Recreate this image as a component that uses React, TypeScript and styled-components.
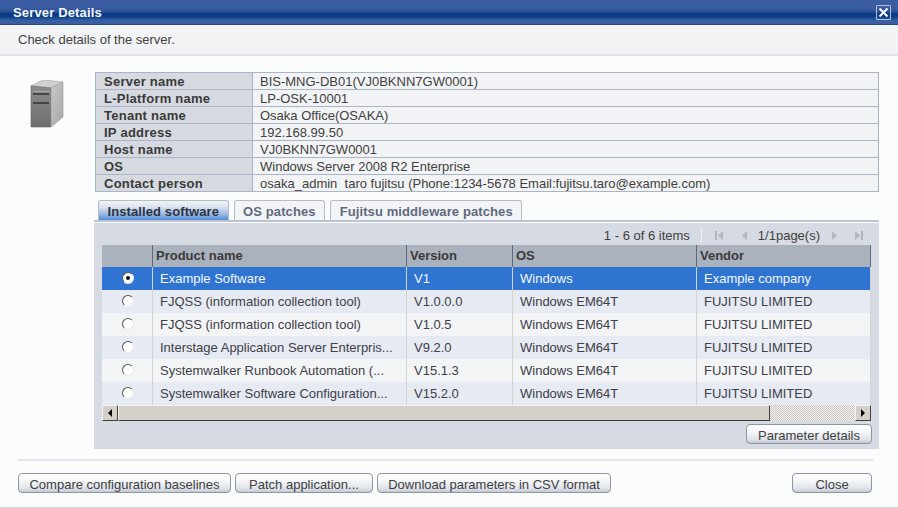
import React from 'react';
import styled, { createGlobalStyle } from 'styled-components';

const Global = createGlobalStyle`
  html, body { margin: 0; padding: 0; background: #fbfcfc; }
  body { width: 898px; height: 508px; overflow: hidden; font-family: "Liberation Sans", Arial, sans-serif; font-size: 13px; color: #3a3a3a; }
`;
const Dialog = styled.div`
  width: 898px; height: 508px; display: flex; flex-direction: column; background: #fbfcfc; box-sizing: border-box;
  border-bottom: 1px solid #d4d6d8;
`;
const TitleBar = styled.div`
  height: 25px; flex: none; box-sizing: border-box; padding: 0 7px 0 13px; display: flex; align-items: center; justify-content: space-between;
  background: linear-gradient(#3c5da3 0, #3a5ca2 30%, #2f5296 48%, #083b82 56%, #0c4088 70%, #3a60a4 86%, #3b5ea3 95%);
  border-bottom: 1px solid #2a4a86;
  color: #f4f6fa; font-weight: bold; font-size: 13px; letter-spacing: 0.15px;
`;
const CloseBox = styled.div`
  width: 15px; height: 15px; box-sizing: border-box; border: 1px solid #b5c2da; border-radius: 1px; display: flex; align-items: center; justify-content: center; margin-top: 1px;
`;
const SubHead = styled.div`
  height: 31px; flex: none; box-sizing: border-box; padding: 0 18px 1px; display: flex; align-items: center;
  background: #f1f3f4; border-bottom: 2px solid #e1e4e7; font-size: 13px; color: #424242;
`;
const Content = styled.div`
  display: grid; grid-template-columns: 94px 1fr; padding-top: 16px; flex: none;
`;
const IconCell = styled.div`
  padding: 8px 0 0 30px;
`;
const Main = styled.div`
  width: 786px; display: flex; flex-direction: column;
`;
const Info = styled.table`
  border-collapse: collapse; width: 784px; margin-left: 1px; table-layout: fixed;
  border: 1px solid #a9b5c7;
  td, th { padding: 1px 0 0; box-sizing: border-box; height: 17px; border: 1px solid #a9b5c7; line-height: 15px; font-size: 13px; white-space: pre; }
  th { width: 157px; background: #d6d9e0; text-align: left; font-weight: bold; padding-left: 8px; color: #3a3a3a; letter-spacing: 0.25px; }
  td { background: #f2f3f4; padding-left: 7px; color: #404040; }
`;
const Tabs = styled.div`
  display: flex; gap: 5px; height: 21px; margin: 7px 0 0 4px; align-items: flex-end;
`;
const Tab = styled.div<{ $active?: boolean }>`
  height: 20px; box-sizing: border-box; border: 1px solid #b4bccb; border-bottom: none; border-radius: 3px 3px 0 0; padding: 1px 8.5px 0;
  font-weight: bold; font-size: 13px; display: flex; align-items: center; letter-spacing: 0.1px;
  color: ${p => (p.$active ? '#2b3443' : '#5f6a80')};
  background: ${p => (p.$active ? 'linear-gradient(#f1f3f6 0, #dfe5ee 30%, #8fb1e0 75%, #4f8ad8 100%)' : '#f2f4f6')};
`;
const Panel = styled.div`
  width: 785px; box-sizing: border-box; height: 229px; border-top: 2px solid #b9c3d3; background: #d6dae2; padding: 3px 7px 0 8px; display: flex; flex-direction: column;
  box-shadow: inset 0 1px 0 #fbfcfc;
`;
const Pager = styled.div`
  height: 20px; display: flex; justify-content: flex-end; align-items: center; font-size: 13px; color: #404040; padding-right: 8px;
`;
const PagerDivider = styled.span`
  width: 1px; height: 14px; background: #eef0f3; margin: 0 13px 0 11px;
`;
const PagerIcon = styled.svg<{ $gap?: boolean }>`
  width: 9px; height: 9px; fill: #b3b6bc; flex: none; margin-left: ${p => (p.$gap ? '16px' : '0')};
`;
const PagerText = styled.span`
  margin: 0 10px 0 9px;
`;
const Grid = styled.div`
  width: 769px; display: grid; grid-template-columns: 51px 254px 106px 184px 174px; flex: none;
`;
const Head = styled.div`
  height: 22px; box-sizing: border-box; background: #aab2bd; font-weight: bold; font-size: 13px; display: flex; align-items: center; padding: 0 0 2px 3px; color: #3a3a3a;
  border-right: 1px solid #5c6a80;
`;
const Cell = styled.div<{ $sel?: boolean; $alt?: boolean }>`
  height: 23px; box-sizing: border-box; padding-left: 7px; display: flex; align-items: center; font-size: 13px; overflow: hidden; white-space: nowrap;
  color: ${p => (p.$sel ? '#f4f7fc' : '#404048')};
  background: ${p => (p.$sel ? '#2f74d0' : p.$alt ? '#f3f4f6' : '#e6eaf2')};
  border-right: 1px solid #d4d3cc;
`;
const RadioCell = styled(Cell)`
  padding-left: 20px;
`;
const Radio = styled.span<{ $on?: boolean }>`
  width: 12px; height: 12px; border-radius: 50%; box-sizing: border-box; background: #fff; position: relative;
  border: 1px solid; border-color: #555 #e8e8e8 #e8e8e8 #555; flex: none; margin-bottom: 2px;
  &::after { content: ''; display: ${p => (p.$on ? 'block' : 'none')}; position: absolute; left: 3px; top: 3px; width: 4px; height: 4px; border-radius: 50%; background: #111; }
`;
const ScrollBar = styled.div`
  width: 769px; height: 16px; display: flex; flex: none; background-color: #f0eeea;
  background-image: conic-gradient(#c9c7c1 25%, #f4f3ef 0 50%, #c9c7c1 0 75%, #f4f3ef 0); background-size: 2px 2px;
`;
const ScrollBtn = styled.div`
  width: 16px; height: 16px; box-sizing: border-box; background: #d4d0c8; display: flex; align-items: center; justify-content: center; flex: none;
  border: 1px solid; border-color: #f4f3ef #404040 #404040 #f4f3ef;
`;
const Thumb = styled.div`
  width: 652px; height: 16px; box-sizing: border-box; background: #d4d0c8; flex: none;
  border: 1px solid; border-color: #f4f3ef #404040 #404040 #f4f3ef;
`;
const Spacer = styled.div`
  flex: 1;
`;
const Btn = styled.button<{ $w: number }>`
  width: ${p => p.$w}px; height: 20px; box-sizing: border-box; padding: 2px 0 0; border: 1px solid #8e96a6; border-radius: 4px; flex: none;
  background: linear-gradient(#ffffff 0, #f6f7f9 35%, #dfe3e9 80%, #c4cad4 100%);
  font: 13px "Liberation Sans", Arial, sans-serif; color: #404040; text-align: center; white-space: nowrap;
`;
const PanelAction = styled.div`
  display: flex; justify-content: flex-end; padding: 3px 0 0; width: 770px;
`;
const Separator = styled.div`
  height: 2px; margin: 10px 25px 0 18px; background: #e3e6ea;
`;
const Footer = styled.div`
  display: flex; gap: 4px; padding: 12px 26px 0 18px;
`;
const FooterEnd = styled(Btn)`
  margin-left: auto;
`;

const ServerIcon = () => (
  <svg width="34" height="48" viewBox="0 0 34 48">
    <defs>
      <linearGradient id="face" x1="0" y1="0" x2="0" y2="1">
        <stop offset="0" stopColor="#8c8c8c" /><stop offset="1" stopColor="#6e6e6e" />
      </linearGradient>
      <linearGradient id="side" x1="0" y1="0" x2="1" y2="1">
        <stop offset="0" stopColor="#c9c9c9" /><stop offset="1" stopColor="#a6a6a6" />
      </linearGradient>
    </defs>
    <polygon points="1,6 13,0 33,2 21,8" fill="#d0d0d0" stroke="#9a9a9a" strokeWidth="0.6" />
    <polygon points="1,6 21,8 21,47 1,47" fill="url(#face)" stroke="#666" strokeWidth="0.6" />
    <polygon points="21,8 33,2 33,37 21,47" fill="url(#side)" stroke="#999" strokeWidth="0.6" />
    <rect x="3" y="13" width="16" height="2" fill="#454545" />
    <rect x="3" y="22" width="16" height="2" fill="#454545" />
    <rect x="3" y="11" width="16" height="1" fill="#a8a8a8" />
  </svg>
);

const info: [string, string][] = [
  ['Server name', 'BIS-MNG-DB01(VJ0BKNN7GW0001)'],
  ['L-Platform name', 'LP-OSK-10001'],
  ['Tenant name', 'Osaka Office(OSAKA)'],
  ['IP address', '192.168.99.50'],
  ['Host name', 'VJ0BKNN7GW0001'],
  ['OS', 'Windows Server 2008 R2 Enterprise'],
  ['Contact person', 'osaka_admin  taro fujitsu (Phone:1234-5678 Email:fujitsu.taro@example.com)'],
];
const rows = [
  ['Example Software', 'V1', 'Windows', 'Example company'],
  ['FJQSS (information collection tool)', 'V1.0.0.0', 'Windows EM64T', 'FUJITSU LIMITED'],
  ['FJQSS (information collection tool)', 'V1.0.5', 'Windows EM64T', 'FUJITSU LIMITED'],
  ['Interstage Application Server Enterpris...', 'V9.2.0', 'Windows EM64T', 'FUJITSU LIMITED'],
  ['Systemwalker Runbook Automation (...', 'V15.1.3', 'Windows EM64T', 'FUJITSU LIMITED'],
  ['Systemwalker Software Configuration...', 'V15.2.0', 'Windows EM64T', 'FUJITSU LIMITED'],
];

export default function App() {
  return (
    <Dialog>
      <Global />
      <TitleBar>
        <span>Server Details</span>
        <CloseBox>
          <svg width="11" height="11" viewBox="0 0 11 11"><path d="M1.5 1.5L9.5 9.5M9.5 1.5L1.5 9.5" stroke="#fff" strokeWidth="2" /></svg>
        </CloseBox>
      </TitleBar>
      <SubHead>Check details of the server.</SubHead>
      <Content>
        <IconCell><ServerIcon /></IconCell>
        <Main>
          <Info>
            <tbody>
              {info.map(([k, v]) => (
                <tr key={k}><th>{k}</th><td>{v}</td></tr>
              ))}
            </tbody>
          </Info>
          <Tabs>
            <Tab $active>Installed software</Tab>
            <Tab>OS patches</Tab>
            <Tab>Fujitsu middleware patches</Tab>
          </Tabs>
          <Panel>
            <Pager>
              1 - 6 of 6 items
              <PagerDivider />
              <PagerIcon viewBox="0 0 9 9"><path d="M0 0h2v9H0zM8 0v9L3 4.5z" /></PagerIcon>
              <PagerIcon $gap viewBox="0 0 9 9"><path d="M7 0v9L2 4.5z" /></PagerIcon>
              <PagerText>1/1page(s)</PagerText>
              <PagerIcon viewBox="0 0 9 9"><path d="M2 0v9l5-4.5z" /></PagerIcon>
              <PagerIcon $gap viewBox="0 0 9 9"><path d="M0 0v9l5-4.5zM6 0h2v9H6z" /></PagerIcon>
            </Pager>
            <Grid>
              <Head />
              <Head>Product name</Head>
              <Head>Version</Head>
              <Head>OS</Head>
              <Head>Vendor</Head>
              {rows.map((r, i) => (
                <React.Fragment key={i}>
                  <RadioCell $sel={i === 0} $alt={i % 2 === 0}><Radio $on={i === 0} /></RadioCell>
                  {r.map((c, j) => (
                    <Cell key={j} $sel={i === 0} $alt={i % 2 === 0}>{c}</Cell>
                  ))}
                </React.Fragment>
              ))}
            </Grid>
            <ScrollBar>
              <ScrollBtn><svg width="6" height="8" viewBox="0 0 6 8"><path d="M5 0v8L1 4z" fill="#000" /></svg></ScrollBtn>
              <Thumb />
              <Spacer />
              <ScrollBtn><svg width="6" height="8" viewBox="0 0 6 8"><path d="M1 0v8l4-4z" fill="#000" /></svg></ScrollBtn>
            </ScrollBar>
            <PanelAction><Btn $w={126}>Parameter details</Btn></PanelAction>
          </Panel>
        </Main>
      </Content>
      <Separator />
      <Footer>
        <Btn $w={213}>Compare configuration baselines</Btn>
        <Btn $w={138}>Patch application...</Btn>
        <Btn $w={234}>Download parameters in CSV format</Btn>
        <FooterEnd $w={80}>Close</FooterEnd>
      </Footer>
    </Dialog>
  );
}
